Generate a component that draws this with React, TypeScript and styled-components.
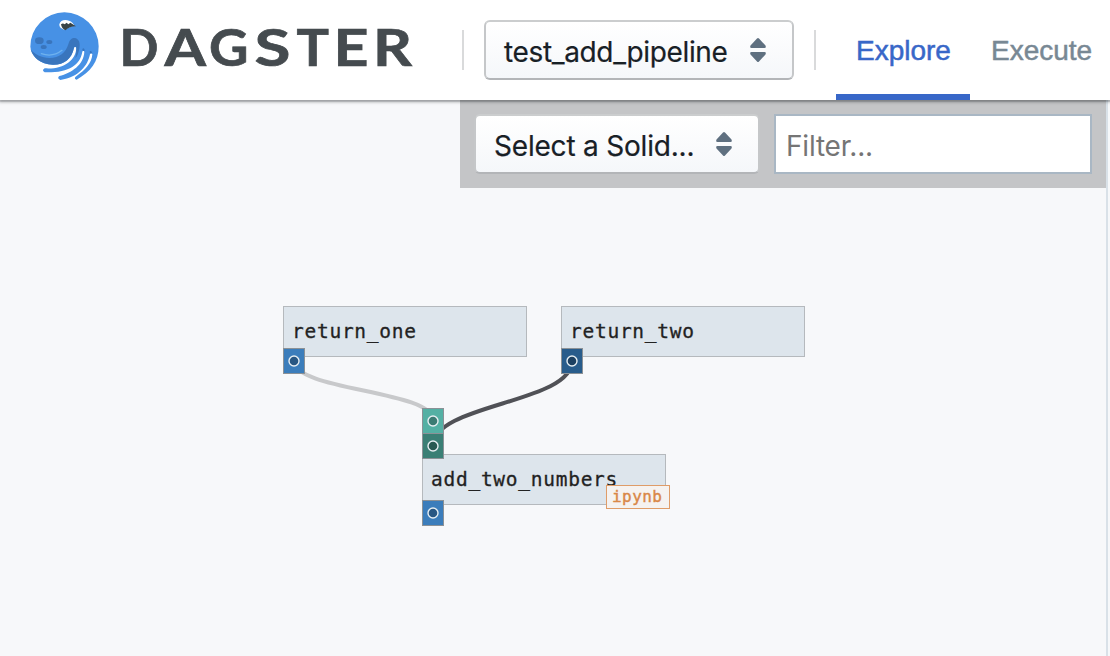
import React from "react";
import styled, { createGlobalStyle } from "styled-components";

const GlobalStyle = createGlobalStyle`
  * { box-sizing: border-box; }
  body {
    margin: 0;
    overflow: hidden;
    background: #f6f8fa;
    font-family: Inter, "Liberation Sans", sans-serif;
  }
`;

const Page = styled.div`
  display: flex;
  flex-direction: column;
  width: 1110px;
  height: 656px;
`;

const Header = styled.header`
  position: relative;
  z-index: 1;
  display: flex;
  align-items: center;
  flex: 0 0 100px;
  padding-left: 20px;
  background: #fff;
  box-shadow: 0 0 0 2px rgba(16, 22, 26, 0.1), 0 1px 3px 1px rgba(16, 22, 26, 0.35);
`;

const Mark = styled.svg`
  flex: none;
  width: 100px;
  height: 100px;
`;

const Wordmark = styled.svg`
  flex: none;
  width: 300px;
  height: 100px;
  font-family: Lato, sans-serif;
  font-weight: 700;
  font-size: 51px;
  fill: #454b4f;
  stroke: #454b4f;
  stroke-width: 0.7;
`;

const Divider = styled.div`
  flex: none;
  width: 2px;
  height: 40px;
  background: #d9dadb;
`;

const Brand = styled.div`
  display: flex;
  flex: 0 0 442px;
`;

const SelectButton = styled.button<{ $width: number; $gap?: number }>`
  display: flex;
  align-items: center;
  justify-content: space-between;
  flex: none;
  width: ${(p) => p.$width}px;
  height: 60px;
  margin: 0 ${(p) => p.$gap ?? 0}px;
  padding: 4px 26px 0 18px;
  border: 2px solid;
  border-color: #cbcdce #c5c7c9 #b3b5b8;
  border-radius: 6px;
  background: linear-gradient(#fff, #f5f7fa);
  color: #182026;
  font-family: Inter, sans-serif;
  font-size: 28px;
  line-height: 34px;
  white-space: nowrap;
`;

const SelectLabel = styled.span<{ $spacing: number }>`
  letter-spacing: ${(p) => p.$spacing}px;
  -webkit-text-stroke: 0.2px currentColor;
`;

const Caret = styled.svg`
  flex: none;
  width: 16px;
  height: 24px;
  margin-top: -4px;
  fill: #5f7080;
`;

const Tabs = styled.nav`
  display: flex;
  height: 100px;
  margin-left: 20px;
`;

const Tab = styled.a<{ $active?: boolean }>`
  flex: none;
  width: 134px;
  height: 100px;
  padding-left: ${(p) => (p.$active ? 20 : 21)}px;
  border-bottom: 6px solid ${(p) => (p.$active ? "#3867c8" : "transparent")};
  color: ${(p) => (p.$active ? "#3867c8" : "#788894")};
  font: 28px/101px "Liberation Sans", sans-serif;
  -webkit-text-stroke: 0.5px currentColor;
  white-space: nowrap;
`;

const Body = styled.main`
  position: relative;
  display: flex;
  flex-direction: column;
  align-items: flex-end;
  flex: 1;
  width: 1108px;
  border-right: 2px solid #d9e1e8;
  background: #f7f8fa;
`;

const Toolbar = styled.div`
  display: flex;
  gap: 14px;
  width: 646px;
  height: 88px;
  padding: 14px;
  background: #c4c5c7;
`;

const FilterInput = styled.input`
  flex: 1;
  min-width: 0;
  height: 60px;
  padding: 4px 10px 0;
  border: 2px solid #a9b7c4;
  border-radius: 0;
  outline: 0;
  background: #fff;
  font: 28px Inter, sans-serif;
  letter-spacing: -0.2px;
  &::placeholder { color: #757575; opacity: 1; }
`;

const Canvas = styled.div`
  position: absolute;
  inset: 0;
  pointer-events: none;
`;

const Edges = styled.svg`
  display: block;
  width: 1106px;
  height: 556px;
  fill: none;
  stroke-width: 4;
`;

const Node = styled.div<{ $x: number; $y: number }>`
  position: absolute;
  left: ${(p) => p.$x}px;
  top: ${(p) => p.$y}px;
  width: 244px;
  height: 51px;
  padding-left: 8px;
  border: 1px solid #b5b9bd;
  background: #dde5ec;
  color: #222;
  font: 19.5px/50px "DejaVu Sans Mono", monospace;
  letter-spacing: 0.73px;
  -webkit-text-stroke: 0.3px currentColor;
  white-space: nowrap;
`;

const Port = styled.div<{ $x: number; $y: number; $fill: string; $core: string }>`
  position: absolute;
  left: ${(p) => p.$x}px;
  top: ${(p) => p.$y}px;
  width: 22px;
  height: 26px;
  border: 1px solid #8b9196;
  background: ${(p) => p.$fill};
`;

const Dot = styled.svg`
  display: block;
  width: 20px;
  height: 24px;
  stroke: #e6eef2;
  stroke-width: 1.4;
`;

const Tag = styled.div`
  position: absolute;
  left: 606px;
  top: 385px;
  width: 64px;
  height: 24px;
  padding-left: 5px;
  border: 1px solid #df9c68;
  background: #f5f2f0;
  color: #d98747;
  font: 16px/21px "DejaVu Sans Mono", monospace;
  letter-spacing: 0.45px;
  -webkit-text-stroke: 0.4px currentColor;
`;

const letters: [string, number, number][] = [
  ["D", 119.5, 39],
  ["A", 164.5, 41.5],
  ["G", 209, 39.5],
  ["S", 254.5, 36],
  ["T", 296.5, 32.5],
  ["E", 333.5, 35],
  ["R", 373, 39],
];

const ports = [
  { x: 283, y: 248, fill: "#3b7dbb", core: "#285783" },
  { x: 561, y: 248, fill: "#285c8b", core: "#1c4061" },
  { x: 422, y: 308, fill: "#54b0a4", core: "#3b7b73" },
  { x: 422, y: 333, fill: "#3a7f75", core: "#285952" },
  { x: 422, y: 400, fill: "#3b7dbb", core: "#285783" },
];

const DoubleCaret = () => (
  <Caret viewBox="0 0 16 24">
    <path d="M7 .5Q8-.5 9 .5L15.5 7.5Q16.5 10 14.5 10H1.5Q-.5 10 .5 7.5ZM1.5 14H14.5Q16.5 14 15.5 16.500L9 23.500Q8 24.500 7 23.500L.5 16.500Q-.5 14 1.5 14Z" />
  </Caret>
);

const Octopus = () => (
  <Mark viewBox="0 0 300 300">
    <path
      fill="#4791e5"
      d="M31 140A102.500 102.500 0 0 1 236 139C236 185 212 216 170 239Q162 237 166 231C198 208 215 190 217 163Q213 156 210 163C204 195 178 232 121 240Q110 235 118 228C155 218 191 195 193 155Q190 149 187 155C181 195 145 219 74 217Q64 211 74 205C128 209 168 183 169 143Q165 137 162 143C155 178 131 195 98 194C61 193 33 169 31 140Z"
    />
    <path fill="#3975bd" d="M32 148C43 164 66 174 88 174C119 174 137 158 145 133C149 117 157 113 165 114C178 117 181 131 178 146C176 158 172 168 166 175C169 162 169 151 169 143Q165 137 162 143C155 178 131 195 98 194C63 193 38 173 32 148Z" />
    <path fill="none" stroke="#2f69b1" strokeWidth="6" strokeLinecap="round" opacity=".7" d="M190 148L191 150M212 156L213 158" />
    <path fill="none" stroke="#6fb2ee" strokeWidth="4" strokeLinecap="round" d="M64 161Q98 173 126 151" />
    <g fill="#3975bd">
      <ellipse cx="58" cy="122" rx="13" ry="10" />
      <ellipse cx="88" cy="126" rx="9" ry="6" />
      <ellipse cx="71" cy="141" rx="9" ry="6" />
    </g>
    <path fill="#fff" d="M118 73C121 56 145 57 157 68L163 76L132 89Q117 84 118 73Z" />
    <path fill="#394447" d="M123 73Q129 68 134 73L140 68L145 73L151 68Q157 72 168 79Q151 78 136 91Q125 86 123 73Z" />
  </Mark>
);

export default function App() {
  return (
    <Page>
      <GlobalStyle />
      <Header>
        <Brand>
          <Octopus />
          <Wordmark viewBox="120 0 300 100">
            {letters.map(([letter, x, width]) => (
              <text key={letter} x={x} y="66" textLength={width} lengthAdjust="spacingAndGlyphs">
                {letter}
              </text>
            ))}
          </Wordmark>
        </Brand>
        <Divider />
        <SelectButton $width={310} $gap={20}>
          <SelectLabel $spacing={-0.35}>test_add_pipeline</SelectLabel>
          <DoubleCaret />
        </SelectButton>
        <Divider />
        <Tabs>
          <Tab $active>Explore</Tab>
          <Tab>Execute</Tab>
        </Tabs>
      </Header>
      <Body>
        <Toolbar>
          <SelectButton $width={286}>
            <SelectLabel $spacing={-0.2}>Select a Solid...</SelectLabel>
            <DoubleCaret />
          </SelectButton>
          <FilterInput placeholder="Filter..." />
        </Toolbar>
        <Canvas>
          <Edges viewBox="0 0 1106 556">
            <path stroke="#c8c9cb" d="M294 261C294 290.500 433 290.500 433 320" />
            <path stroke="#505156" d="M572 261C572 303.500 433 303.500 433 346" />
          </Edges>
          <Node $x={283} $y={206}>return_one</Node>
          <Node $x={561} $y={206}>return_two</Node>
          <Node $x={422} $y={354}>add_two_numbers</Node>
          {ports.map((p) => (
            <Port key={`${p.x}-${p.y}`} $x={p.x} $y={p.y} $fill={p.fill} $core={p.core}>
              <Dot viewBox="0 0 20 24">
                <circle cx="10" cy="12" r="5" fill={p.core} />
              </Dot>
            </Port>
          ))}
          <Tag>ipynb</Tag>
        </Canvas>
      </Body>
    </Page>
  );
}
